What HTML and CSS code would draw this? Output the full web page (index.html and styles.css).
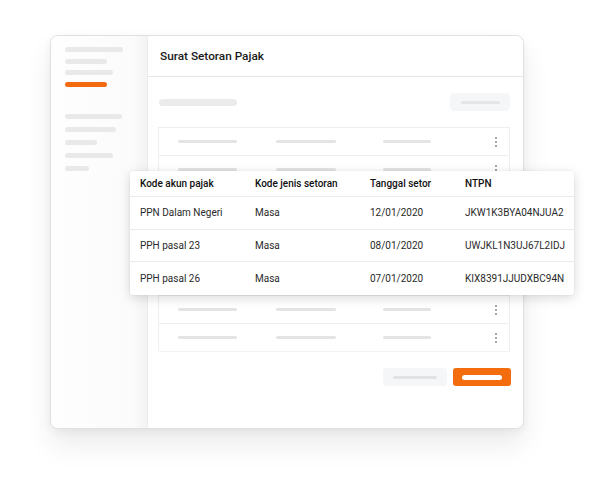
FILE: index.html
```html
<!DOCTYPE html>
<html>
<head>
<meta charset="utf-8">
<link rel="stylesheet" href="styles.css">
</head>
<body>
<div class="stage">
  <div class="window">
    <aside class="sidebar">
      <div class="group first">
        <span class="sbar w58"></span>
        <span class="sbar w42"></span>
        <span class="sbar w48"></span>
        <span class="sbar w42 active"></span>
      </div>
      <div class="group">
        <span class="sbar w57"></span>
        <span class="sbar w51"></span>
        <span class="sbar w32"></span>
        <span class="sbar w48"></span>
        <span class="sbar w24"></span>
      </div>
    </aside>
    <main class="main">
      <header class="header">Surat Setoran Pajak</header>
      <div class="content">
        <div class="toolbar">
          <span class="title-bar"></span>
          <span class="ghost-btn"><span class="btn-line"></span></span>
        </div>
        <div class="table">
          <div class="row"><span class="cell c1"></span><span class="cell c2"></span><span class="cell c3"></span><span class="dots"><i></i><i></i><i></i></span></div>
          <div class="row"><span class="cell c1"></span><span class="cell c2"></span><span class="cell c3"></span><span class="dots"><i></i><i></i><i></i></span></div>
          <div class="row"><span class="cell c1"></span><span class="cell c2"></span><span class="cell c3"></span><span class="dots"><i></i><i></i><i></i></span></div>
          <div class="row"><span class="cell c1"></span><span class="cell c2"></span><span class="cell c3"></span><span class="dots"><i></i><i></i><i></i></span></div>
          <div class="row"><span class="cell c1"></span><span class="cell c2"></span><span class="cell c3"></span><span class="dots"><i></i><i></i><i></i></span></div>
          <div class="row"><span class="cell c1"></span><span class="cell c2"></span><span class="cell c3"></span><span class="dots"><i></i><i></i><i></i></span></div>
          <div class="row"><span class="cell c1"></span><span class="cell c2"></span><span class="cell c3"></span><span class="dots"><i></i><i></i><i></i></span></div>
          <div class="row"><span class="cell c1"></span><span class="cell c2"></span><span class="cell c3"></span><span class="dots"><i></i><i></i><i></i></span></div>
        </div>
        <div class="actions">
          <span class="ghost-btn small"><span class="btn-line gray"></span></span>
          <span class="primary-btn"><span class="btn-line white"></span></span>
        </div>
      </div>
    </main>
  </div>

  <div class="overlay">
    <div class="orow head">
      <span class="col a">Kode akun pajak</span>
      <span class="col b">Kode jenis setoran</span>
      <span class="col c">Tanggal setor</span>
      <span class="col d">NTPN</span>
    </div>
    <div class="orow">
      <span class="col a">PPN Dalam Negeri</span>
      <span class="col b">Masa</span>
      <span class="col c">12/01/2020</span>
      <span class="col d">JKW1K3BYA04NJUA2</span>
    </div>
    <div class="orow">
      <span class="col a">PPH pasal 23</span>
      <span class="col b">Masa</span>
      <span class="col c">08/01/2020</span>
      <span class="col d">UWJKL1N3UJ67L2IDJ</span>
    </div>
    <div class="orow last">
      <span class="col a">PPH pasal 26</span>
      <span class="col b">Masa</span>
      <span class="col c">07/01/2020</span>
      <span class="col d">KIX8391JJUDXBC94N</span>
    </div>
  </div>
</div>
</body>
</html>
```

FILE: styles.css
```css
* { box-sizing: border-box; }
html, body { margin: 0; padding: 0; background: #ffffff; }
body { font-family: Roboto, "Liberation Sans", Arial, sans-serif; color: #222; }

.stage {
  position: relative;
  width: 600px;
  height: 488px;
  padding: 35px 0 0 50px;
}

.window {
  display: flex;
  width: 474px;
  height: 394px;
  border: 1px solid #e0e0e0;
  border-radius: 8px;
  background: #fff;
  box-shadow: 0 16px 28px rgba(0,0,0,0.08), 0 3px 8px rgba(0,0,0,0.05);
  overflow: hidden;
}

.sidebar {
  width: 97px;
  flex: none;
  background: linear-gradient(to right, #fefefe 0%, #fbfbfb 85%, #f3f3f3 100%);
  border-right: 1px solid #ececec;
  padding: 11px 0 0 14px;
  display: flex;
  flex-direction: column;
  gap: 27px;
}
.group { display: flex; flex-direction: column; gap: 8px; }
.group.first { gap: 6.5px; }
.sbar {
  display: block;
  height: 5px;
  border-radius: 3px;
  background: #e9e9e9;
}
.sbar.active { background: #f26b0f; }
.w58 { width: 58px; }
.w57 { width: 57px; }
.w51 { width: 51px; }
.w48 { width: 48px; }
.w42 { width: 42px; }
.w32 { width: 32px; }
.w24 { width: 24px; }

.main {
  flex: 1;
  display: flex;
  flex-direction: column;
  background: #fff;
}
.header {
  height: 41px;
  flex: none;
  border-bottom: 1px solid #e6e6e6;
  padding: 13px 0 0 12px;
  font-size: 11.8px;
  font-weight: 500;
  color: #1a1a1a;
}
.content {
  padding: 0 13px 0 10px;
  display: flex;
  flex-direction: column;
}
.toolbar {
  height: 50px;
  display: flex;
  align-items: center;
  justify-content: space-between;
  padding: 0 0 0 1px;
}
.title-bar {
  width: 78px;
  height: 7px;
  border-radius: 4px;
  background: #ebebeb;
}
.ghost-btn {
  width: 60px;
  height: 18px;
  border-radius: 4px;
  background: #f4f6f8;
  display: flex;
  align-items: center;
  justify-content: center;
}
.btn-line {
  width: 39px;
  height: 3px;
  border-radius: 2px;
  background: #e3e5e8;
}
.btn-line.gray { width: 44px; background: #e0e2e5; }
.btn-line.white { width: 40px; height: 5px; background: #fff; border-radius: 3px; }

.table {
  border: 1px solid #eeeeee;
  border-bottom-color: #f2f2f2;
}
.row {
  height: 28px;
  display: flex;
  align-items: center;
  border-top: 1px solid #eeeeee;
  padding-left: 19px;
}
.row:first-child { border-top: none; height: 27px; }
.cell {
  height: 3px;
  border-radius: 2px;
  background: #e4e4e4;
}
.c1 { width: 59px; margin-right: 39px; }
.c2 { width: 60px; margin-right: 47px; }
.c3 { width: 48px; }
.dots {
  margin-left: auto;
  margin-right: 12px;
  display: flex;
  flex-direction: column;
  gap: 2px;
}
.dots i {
  display: block;
  width: 2px;
  height: 2px;
  border-radius: 50%;
  background: #8a8a8a;
}

.actions {
  display: flex;
  justify-content: flex-end;
  gap: 6px;
  margin-top: 16px;
  margin-right: -1px;
}
.ghost-btn.small { width: 64px; height: 18px; }
.primary-btn {
  width: 58px;
  height: 18px;
  border-radius: 3px;
  background: #f36c0e;
  display: flex;
  align-items: center;
  justify-content: center;
}

.overlay {
  position: absolute;
  left: 130px;
  top: 171px;
  width: 444px;
  background: #fff;
  border-radius: 3px;
  box-shadow: 0 3px 12px rgba(0,0,0,0.15), 0 0 2px rgba(0,0,0,0.08);
  font-size: 10px;
}
.orow {
  display: flex;
  align-items: center;
  height: 32.5px;
  border-bottom: 1px solid #ececec;
  padding-left: 10px;
  color: #2a2a2a;
}
.orow.head {
  height: 26px;
  font-weight: 500;
  color: #111;
}
.orow.last { border-bottom: none; }
.col { white-space: nowrap; }
.col.a { width: 115px; }
.col.b { width: 115px; }
.col.c { width: 95px; }
.col.d { width: auto; }
```
